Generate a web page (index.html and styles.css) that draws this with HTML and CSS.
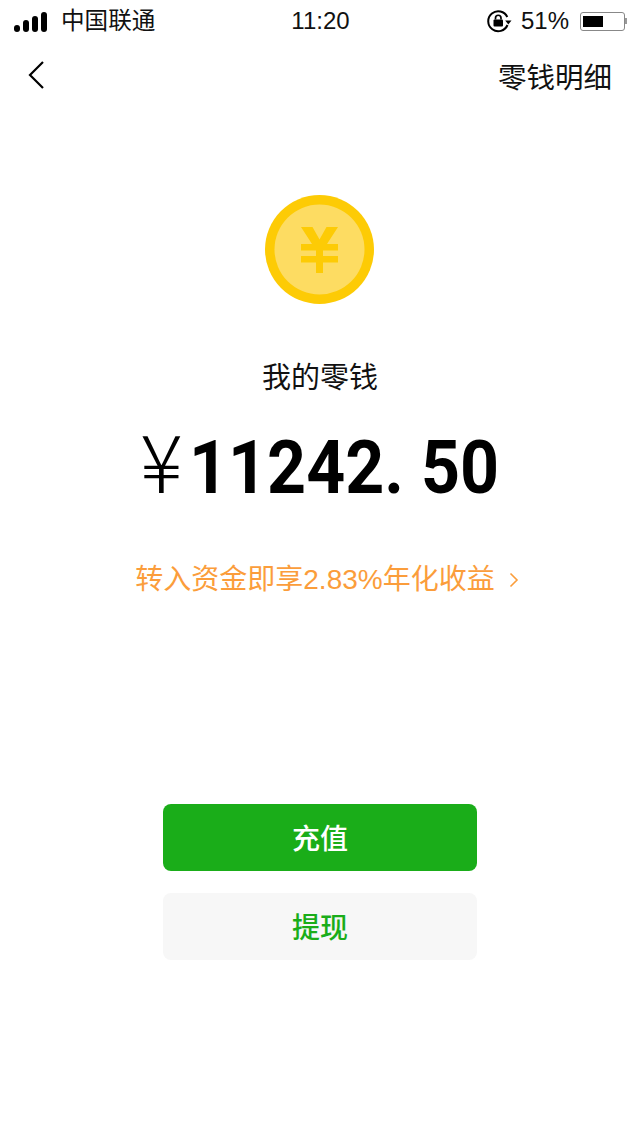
FILE: index.html
```html
<!DOCTYPE html>
<html lang="zh-CN">
<head>
<meta charset="utf-8">
<title>我的零钱</title>
<link rel="stylesheet" href="styles.css">
</head>
<body>
<div class="page">
  <header class="status">
    <div class="status-left">
      <span class="signal"><i class="b1"></i><i class="b2"></i><i class="b3"></i><i class="b4"></i></span>
      <span class="carrier">中国联通</span>
    </div>
    <div class="time">11:20</div>
    <div class="status-right">
      <svg class="lock" width="25" height="24" viewBox="0 0 25 24"><path d="M20.500 16A10 10 0 1 1 20.300 8" fill="none" stroke="#000" stroke-width="2"/><path d="M18.200 11.500h6.300l-3.150 3.900z" fill="#000"/><rect x="6.500" y="10.500" width="9.500" height="7" rx="1" fill="#000"/><path d="M8.500 10.500V9a2.750 2.750 0 0 1 5.500 0v1.500" fill="none" stroke="#000" stroke-width="1.700"/></svg>
      <span class="pct">51%</span>
      <span class="battery"><span class="battery-body"><span class="battery-fill"></span></span><span class="battery-tip"></span></span>
    </div>
  </header>
  <nav class="navbar">
    <svg class="back" width="16" height="28" viewBox="0 0 16 28"><path d="M15 1 2 14l13 13" fill="none" stroke="#000" stroke-width="2.200"/></svg>
    <span class="detail">零钱明细</span>
  </nav>
  <main class="main">
    <svg class="coin" width="109" height="109" viewBox="0 0 109 109">
      <circle cx="54.500" cy="54.500" r="54.500" fill="#fdcb05"/>
      <circle cx="54.500" cy="54.500" r="45" fill="#fddc62"/>
      <path d="M36 32h11.500L54.500 44.500 61.500 32H73L62 49h11v6.500H58v5.500h15v6.500H58V78h-7V67.500H36V61h15v-5.500H36V49h11z" fill="#fdcb05"/>
    </svg>
    <div class="label">我的零钱</div>
    <div class="amount"><span class="yen">¥</span><span class="num">11242. 50</span></div>
    <div class="promo"><span class="promo-text">转入资金即享2.83%年化收益</span>
      <svg class="chev" width="10" height="16" viewBox="0 0 10 16"><path d="M1.500 1.500 8 8l-6.500 6.500" fill="none" stroke="#fb9d3b" stroke-width="1.600"/></svg>
    </div>
    <div class="actions">
      <button class="btn primary">充值</button>
      <button class="btn secondary">提现</button>
    </div>
  </main>
</div>
</body>
</html>
```
FILE: styles.css
```css
* { box-sizing: border-box; }
html, body { margin: 0; padding: 0; background: #fff; }
body { font-family: "Liberation Sans", "Noto Sans CJK SC", sans-serif; color: #000; }
.page { width: 640px; height: 1136px; overflow: hidden; display: flex; flex-direction: column; }
.status { height: 42px; display: grid; grid-template-columns: 1fr auto 1fr; align-items: center; padding: 0 13px 0 14px; font-size: 24px; color: #111; }
.status-left { display: flex; align-items: center; gap: 14px; }
.carrier { position: relative; top: -2px; font-size: 23.600px; }
.signal { display: flex; align-items: flex-end; gap: 3px; height: 20px; margin-top: 1px; }
.signal i { width: 6px; background: #000; border-radius: 3px; }
.b1 { height: 7px; } .b2 { height: 12px; } .b3 { height: 16px; } .b4 { height: 20px; }
.status-right { display: flex; align-items: center; justify-content: flex-end; gap: 11px; }
.lock { margin-right: -2px; }
.battery { display: flex; align-items: center; }
.battery-body { width: 45px; height: 19px; border: 1px solid #888; border-radius: 3px; padding: 3px 2px; display: block; }
.battery-fill { display: block; width: 20px; height: 100%; background: #000; }
.battery-tip { width: 2px; height: 6px; background: #999; }
.navbar { height: 66px; display: flex; align-items: center; justify-content: space-between; padding: 0 28px; }
.detail { font-size: 28.500px; color: #111; }
.main { display: flex; flex-direction: column; align-items: center; padding-top: 87px; }
.coin { margin-left: -1px; }
.label { font-size: 29px; line-height: 40px; margin-top: 54px; color: #111; }
.amount { display: flex; align-items: baseline; justify-content: flex-start; width: 360px; margin-top: 14px; height: 92px; line-height: 92px; white-space: nowrap; }
.yen { font-family: "Noto Sans CJK SC", sans-serif; font-size: 80px; font-weight: 300; }
.num { font-family: Roboto, "Liberation Sans", sans-serif; font-size: 74px; font-weight: 700; transform: scaleX(.92); transform-origin: left center; margin-left: 6px; }
.promo { display: flex; align-items: center; gap: 14px; margin-top: 56px; margin-left: 14px; color: #fb9d3b; }
.promo-text { font-size: 28px; line-height: 40px; }
.actions { display: flex; flex-direction: column; gap: 22px; margin-top: 204px; }
.btn { width: 314px; height: 67px; border: 0; border-radius: 8px; padding-bottom: 2px; font-family: inherit; font-size: 28px; font-weight: 500; }
.primary { background: #1aad19; color: #fff; }
.secondary { background: #f7f7f7; color: #1aad19; }
```
